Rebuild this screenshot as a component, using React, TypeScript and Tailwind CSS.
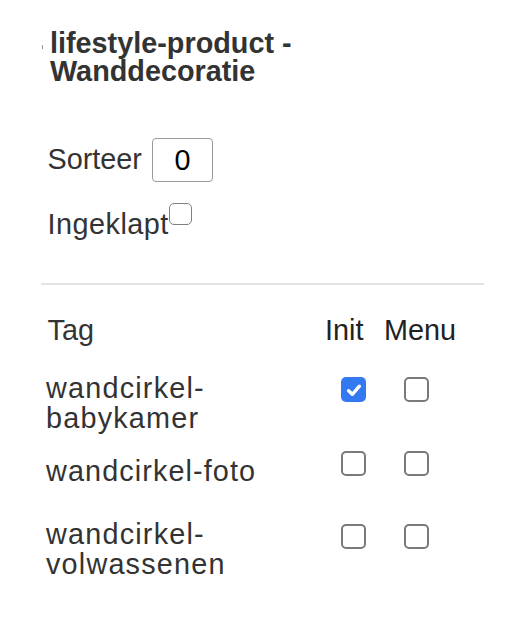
import React from "react";

function Box({ checked = false }: { checked?: boolean }) {
  if (checked) {
    return (
      <div className="w-[25px] h-[25px] rounded-[5px] bg-[#3279f2] flex items-center justify-center shrink-0">
        <svg width="18" height="18" viewBox="0 0 16 16" fill="none">
          <path d="M3.2 8.6 L6.5 11.8 L12.8 4.6" stroke="white" strokeWidth="3" strokeLinecap="round" strokeLinejoin="round" />
        </svg>
      </div>
    );
  }
  return <div className="w-[25px] h-[25px] rounded-[5px] border-2 border-[#7a7a7a] bg-white shrink-0" />;
}

export default function App() {
  const font = { fontFamily: '"Liberation Sans", Arial, Helvetica, sans-serif' };
  return (
    <div className="min-h-[622px] w-[516px] bg-white text-[#333333] pl-[46px] pr-[32px] pt-[29px]" style={font}>
      <div className="relative pl-[4px] font-bold text-[28.8px] leading-[28px]">
        <span className="absolute left-[-4px] top-[16px] w-px h-[4px] bg-[#9a9a9a]" />
        <div>lifestyle-product -</div>
        <div>Wanddecoratie</div>
      </div>

      <div className="mt-[53px] flex items-start text-[28.8px]">
        <span className="mt-[5px] leading-[33px] pl-[1.5px]">Sorteer</span>
        <input
          readOnly
          value="0"
          className="ml-[10px] w-[61px] h-[44px] border border-[#9a9a9a] rounded-[4px] text-center text-black outline-none bg-white"
          style={font}
        />
      </div>

      <div className="mt-[21px] flex items-start text-[28.8px] leading-[33px]">
        <span className="pl-[1.5px] mt-[4.5px] tracking-[0.5px]">Ingeklapt</span>
        <div className="w-[23px] h-[22px] rounded-[5px] border-[1.5px] border-[#808080] bg-white shrink-0" />
      </div>

      <div className="mt-[42.5px] -ml-[5px] border-t-2 border-[#e3e3e3]" />

      <div className="mt-[30px] flex text-[28.8px] leading-[30px]">
        <div className="w-[279px] pl-[1.5px]">Tag</div>
        <div className="w-[59px] text-[#222222]">Init</div>
        <div className="text-[#222222]">Menu</div>
      </div>

      <div className="mt-[28px] flex items-start text-[28.8px] leading-[30px]">
        <div className="w-[276px] tracking-[1.2px]">
          <div>wandcirkel-</div>
          <div>babykamer</div>
        </div>
        <div className="w-[60px] pl-[19px] pt-[4px]">
          <Box checked />
        </div>
        <div className="pl-[22px] pt-[4px]">
          <Box />
        </div>
      </div>

      <div className="mt-[18px] flex items-start text-[28.8px] leading-[30px]">
        <div className="w-[276px] pt-[5px] tracking-[1.1px]">wandcirkel-foto</div>
        <div className="w-[60px] pl-[19px]">
          <Box />
        </div>
        <div className="pl-[22px]">
          <Box />
        </div>
      </div>

      <div className="mt-[33px] flex items-start text-[28.8px] leading-[30px]">
        <div className="w-[276px] tracking-[1.2px]">
          <div>wandcirkel-</div>
          <div>volwassenen</div>
        </div>
        <div className="w-[60px] pl-[19px] pt-[5px]">
          <Box />
        </div>
        <div className="pl-[22px] pt-[5px]">
          <Box />
        </div>
      </div>
    </div>
  );
}
